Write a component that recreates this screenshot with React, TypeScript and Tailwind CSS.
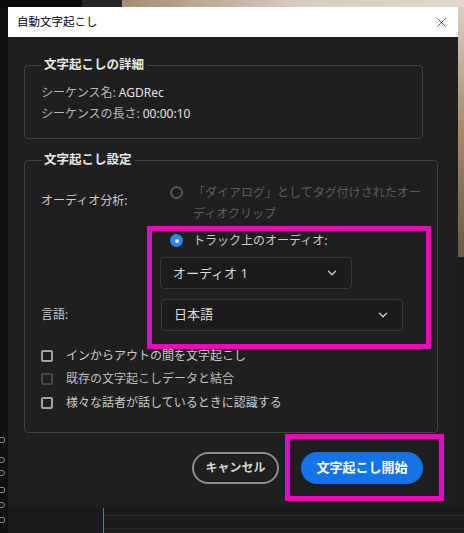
import { ChevronDown, X } from "lucide-react";

const font = "font-['Noto_Sans','Noto_Sans_CJK_JP',sans-serif]";

function Radio({ checked, disabled }: { checked?: boolean; disabled?: boolean }) {
  if (checked) {
    return (
      <span className="mt-[4px] flex h-[13px] w-[13px] shrink-0 items-center justify-center rounded-full bg-[#2c86ee]">
        <span className="h-[4px] w-[4px] rounded-full bg-[#dfeaff]" />
      </span>
    );
  }
  return (
    <span
      className={`mt-[4px] h-[13px] w-[13px] shrink-0 rounded-full border-2 ${
        disabled ? "border-[#575757]" : "border-[#a0a0a0]"
      }`}
    />
  );
}

function Select({ value, width }: { value: string; width: string }) {
  return (
    <div
      className={`flex h-8 items-center justify-between rounded-[4px] border border-[#383838] bg-[#1b1b1b] pl-3 pr-3 text-[13px] text-[#d9d9d9] ${width}`}
    >
      <span>{value}</span>
      <ChevronDown size={14} strokeWidth={2.2} className="text-[#cfcfcf]" />
    </div>
  );
}

function Check({ label, disabled }: { label: string; disabled?: boolean }) {
  return (
    <div className="flex h-[23.5px] items-center gap-[13px]">
      <span
        className={`h-3 w-3 shrink-0 rounded-[2px] border-2 ${
          disabled ? "border-[#474747]" : "border-[#a3a3a3]"
        }`}
      />
      <span className={disabled ? "text-[#bdbdbd]" : "text-[#c9c9c9]"}>{label}</span>
    </div>
  );
}

export default function App() {
  return (
    <div className={`relative flex h-[533px] w-[464px] flex-col overflow-hidden bg-[#1c1c1c] ${font}`}>
      {/* app behind, top strip */}
      <div className="flex h-[7px] shrink-0">
        <div className="w-[82px] bg-[#0a0a0a]" />
        <div className="w-[40px] bg-[#262626]" />
        <div className="flex-1 bg-gradient-to-r from-[#a88c70] via-[#d6cbbd] to-[#e0d8cc]" />
      </div>

      <div className="flex flex-1">
        {/* left edge of the app: track icons */}
        <div className="flex w-[8px] shrink-0 flex-col bg-[#0f0f0f] pt-[430px]">
          <span className="ml-[-2px] h-[6px] w-[7px] rounded-[2px] border border-[#8a8a8a]" />
          <span className="ml-[-2px] mt-[14px] h-[6px] w-[7px] rounded-full border border-[#8a8a8a]" />
          <span className="ml-[-2px] mt-[7px] h-[6px] w-[7px] rounded-full border border-[#8a8a8a]" />
          <span className="ml-[-2px] mt-[11px] h-[6px] w-[7px] rounded-[2px] border border-[#8a8a8a]" />
          <span className="ml-[-2px] mt-[9px] h-[6px] w-[7px] rounded-full border border-[#8a8a8a]" />
          <span className="ml-[-2px] mt-[9px] h-[6px] w-[7px] rounded-[2px] border border-[#8a8a8a]" />
        </div>

        <div className="flex flex-1 flex-col">
          <div className="flex h-[499px] shrink-0">
            {/* dialog */}
            <div className="flex w-[450px] flex-col bg-[#1f1f1f]">
              <div className="flex h-[30px] items-center justify-between bg-white pl-[9px] pr-[9px]">
                <span className="text-[11.5px] text-black">自動文字起こし</span>
                <X size={15} strokeWidth={1.2} className="text-[#222]" />
              </div>

              <div className="flex flex-col pl-4 pr-[35px] pt-5 text-[12px]">
                <fieldset className="rounded-[4px] border border-[#424242] pb-[14px] pl-4 pr-4">
                  <legend className="px-[3px] text-[12.5px] font-bold leading-4 text-[#e6e6e6]">
                    文字起こしの詳細
                  </legend>
                  <div className="pt-[9px] leading-[21px]">
                    <div>
                      <span className="text-[#b9b9b9]">シーケンス名: </span>
                      <span className="text-[#e4e4e4]">AGDRec</span>
                    </div>
                    <div>
                      <span className="text-[#b9b9b9]">シーケンスの長さ: </span>
                      <span className="text-[#e4e4e4]">00:00:10</span>
                    </div>
                  </div>
                </fieldset>

                <fieldset className="mt-[13px] rounded-[4px] border border-[#424242] pb-[17px] pl-4 pr-4">
                  <legend className="px-[3px] text-[12.5px] font-bold leading-4 text-[#e6e6e6]">
                    文字起こし設定
                  </legend>

                  <div className="flex pt-[14px] leading-[21px]">
                    <div className="mt-[8px] w-[119px] shrink-0 text-[#c9c9c9]">オーディオ分析:</div>
                    <div className="flex flex-col">
                      <div className="ml-[10px] flex items-start gap-[10px]">
                        <Radio disabled />
                        <span className="whitespace-nowrap text-[#5e5e5e]">
                          「ダイアログ」としてタグ付けされたオー
                          <br />
                          ディオクリップ
                        </span>
                      </div>
                      <div className="ml-[10px] mt-[6px] flex items-start gap-[10px]">
                        <Radio checked />
                        <span className="text-[#c9c9c9]">トラック上のオーディオ:</span>
                      </div>
                      <div className="mt-[6px]">
                        <Select value="オーディオ 1" width="w-[192px]" />
                      </div>
                    </div>
                  </div>

                  <div className="mt-[10px] flex items-center">
                    <div className="w-[120px] shrink-0 text-[#c9c9c9]">言語:</div>
                    <Select value="日本語" width="w-[242px]" />
                  </div>

                  <div className="mt-[13px] flex flex-col">
                    <Check label="インからアウトの間を文字起こし" />
                    <Check label="既存の文字起こしデータと結合" disabled />
                    <Check label="様々な話者が話しているときに認識する" />
                  </div>
                </fieldset>

                <div className="mt-[19px] flex justify-end gap-[22px]">
                  <button className="h-8 w-[87px] rounded-full border-2 border-[#8e8e8e] text-[12px] font-bold text-[#d4d4d4]">
                    キャンセル
                  </button>
                  <button className="h-8 w-[122px] rounded-full bg-[#1473e6] text-[13px] font-bold text-white">
                    文字起こし開始
                  </button>
                </div>
              </div>
            </div>

            {/* right edge: footage behind */}
            <div className="flex w-[6px] flex-col">
              <div className="h-[250px] bg-gradient-to-b from-[#d9d0c2] via-[#a48a68] to-[#6b5a44]" />
              <div className="flex-1 bg-[#1e1e1e]" />
            </div>
          </div>

          {/* timeline behind */}
          <div className="flex flex-1 bg-[#1b1b1b] pt-[2px]">
            <div className="w-[95px] shrink-0" />
            <div className="w-px bg-[#3b7fd8]" />
            <div className="flex flex-1 flex-col">
              <div className="mt-[7px] h-px bg-[#2c2c2c]" />
              <div className="mt-[12px] h-px bg-[#262626]" />
            </div>
          </div>
        </div>
      </div>

      {/* annotation boxes */}
      <div className="pointer-events-none absolute left-[147px] top-[226px] h-[123px] w-[284px] border-[5px] border-[#e20bbf]" />
      <div className="pointer-events-none absolute left-[285px] top-[434px] h-[67px] w-[159px] border-[5px] border-[#e20bbf]" />
    </div>
  );
}
